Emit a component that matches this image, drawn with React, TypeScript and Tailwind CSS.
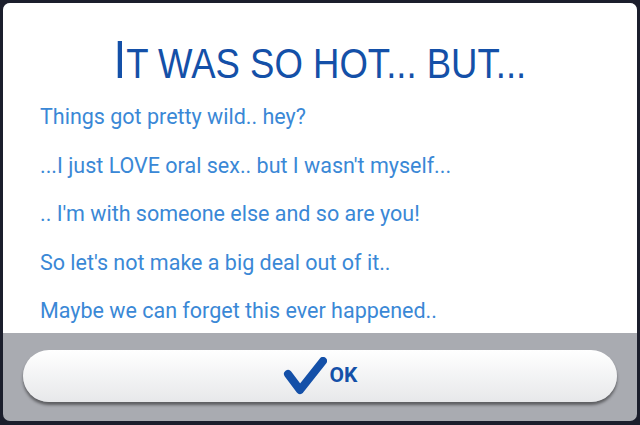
import React from "react";

const lines = [
  "Things got pretty wild.. hey?",
  "...I just LOVE oral sex.. but I wasn't myself...",
  ".. I'm with someone else and so are you!",
  "So let's not make a big deal out of it..",
  "Maybe we can forget this ever happened..",
];

// thick tapered tick used on the confirm button
function Check() {
  return (
    <svg width="44" height="38" viewBox="0 0 44 38" className="shrink-0">
      <path
        d="M5 17 L17 33 L40 4"
        fill="none"
        stroke="#1450a8"
        strokeWidth="8"
        strokeLinecap="round"
        strokeLinejoin="round"
      />
    </svg>
  );
}

export default function App() {
  return (
    <div className="h-[425px] w-[640px] bg-[#1b1e2c] p-[3px]">
      <div className="flex h-[418px] flex-col overflow-hidden rounded-[7px] bg-[#a9abb1]">
        <div className="flex h-[330px] flex-col bg-white">
          <div className="mt-[29px] flex justify-center">
            <h1
              className="inline-block origin-center scale-x-[0.85] whitespace-nowrap leading-none text-[#1450a8]"
              style={{ fontFamily: '"Liberation Sans", Arial, sans-serif' }}
            >
              <span className="text-[54px]">I</span>
              <span className="text-[43px]">T WAS SO HOT... BUT...</span>
            </h1>
          </div>
          <div
            className="mt-[20px] flex flex-col gap-[26.5px] pl-[37px] text-[21.5px] leading-[22px] text-[#3a88d6]"
            style={{ fontFamily: "Roboto, Arial, sans-serif" }}
          >
            {lines.map((l) => (
              <p key={l}>{l}</p>
            ))}
          </div>
        </div>
        <div className="flex flex-1 items-start px-[20px] pt-[17px]">
          <button className="flex h-[52px] w-full items-center justify-center gap-[3px] rounded-full bg-gradient-to-b from-white to-[#e7e8ea] shadow-[0_3px_3px_rgba(0,0,0,0.45)]">
            <Check />
            <span
              className="text-[21px] font-bold text-[#1450a8]"
              style={{ fontFamily: "Roboto, Arial, sans-serif" }}
            >
              OK
            </span>
          </button>
        </div>
      </div>
    </div>
  );
}
